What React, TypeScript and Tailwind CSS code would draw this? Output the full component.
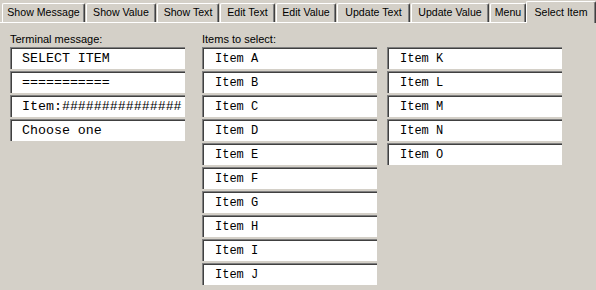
import React from "react";

const tabs = [
  { label: "Show Message", w: "w-[83px]" },
  { label: "Show Value", w: "w-[70px]" },
  { label: "Show Text", w: "w-[62px]" },
  { label: "Edit Text", w: "w-[55px]" },
  { label: "Edit Value", w: "w-[60px]" },
  { label: "Update Text", w: "w-[73px]" },
  { label: "Update Value", w: "w-[78px]" },
  { label: "Menu", w: "w-[36px]" },
];

const terminal = ["SELECT ITEM", "===========", "Item:###############", "Choose one"];
const colA = ["Item A", "Item B", "Item C", "Item D", "Item E", "Item F", "Item G", "Item H", "Item I", "Item J"];
const colB = ["Item K", "Item L", "Item M", "Item N", "Item O"];

// classic sunken text field
function Field({ text, big }: { text: string; big?: boolean }) {
  return (
    <div className="h-[22px] border-t border-l border-[#808080] border-b-white border-r-white">
      <div className="h-full border-t border-l border-[#404040] border-b-[#d4d0c8] border-r-[#d4d0c8] bg-white flex items-center overflow-hidden whitespace-nowrap">
        {big ? (
          <span className="pl-[10px] text-[13.3px] text-black font-['Liberation_Mono',monospace]">{text}</span>
        ) : (
          <span className="pl-[11px] text-[12px] text-black font-['Liberation_Mono',monospace]">{text}</span>
        )}
      </div>
    </div>
  );
}

export default function App() {
  return (
    <div className="w-[596px] h-[290px] bg-[#d4d0c8] overflow-hidden font-['Liberation_Sans',Arial,sans-serif] text-[10.6px] text-black">
      {/* Tab strip */}
      <div className="flex items-end h-[22px] pl-[2px]">
        {tabs.map((t) => (
          <div
            key={t.label}
            className={`${t.w} h-[19px] mr-[1px] flex items-center justify-center border-t border-l border-white border-r border-r-[#404040] rounded-t-[2px] shadow-[inset_-1px_0_0_#808080]`}
          >
            {t.label}
          </div>
        ))}
        <div className="w-[70px] h-[22px] -mb-[1px] ml-[-1px] relative z-10 bg-[#d4d0c8] flex items-start pt-[3px] justify-center border-t border-l border-white border-r border-r-[#404040] rounded-t-[2px] shadow-[inset_-1px_0_0_#808080]">
          Select Item
        </div>
      </div>

      {/* Panel */}
      <div className="border-t border-white pl-[10px] pt-[9px] flex">
        <div className="w-[175px] flex flex-col">
          <div className="h-[14px] leading-[14px] text-[11px]">Terminal message:</div>
          <div className="flex flex-col gap-[2px] mt-[1px]">
            {terminal.map((t) => (
              <Field key={t} text={t} big />
            ))}
          </div>
        </div>
        <div className="ml-[17px] flex flex-col">
          <div className="h-[14px] leading-[14px] text-[11px]">Items to select:</div>
          <div className="flex gap-[10px] mt-[1px]">
            <div className="w-[175px] flex flex-col gap-[2px]">
              {colA.map((t) => (
                <Field key={t} text={t} />
              ))}
            </div>
            <div className="w-[175px] flex flex-col gap-[2px]">
              {colB.map((t) => (
                <Field key={t} text={t} />
              ))}
            </div>
          </div>
        </div>
      </div>
    </div>
  );
}
